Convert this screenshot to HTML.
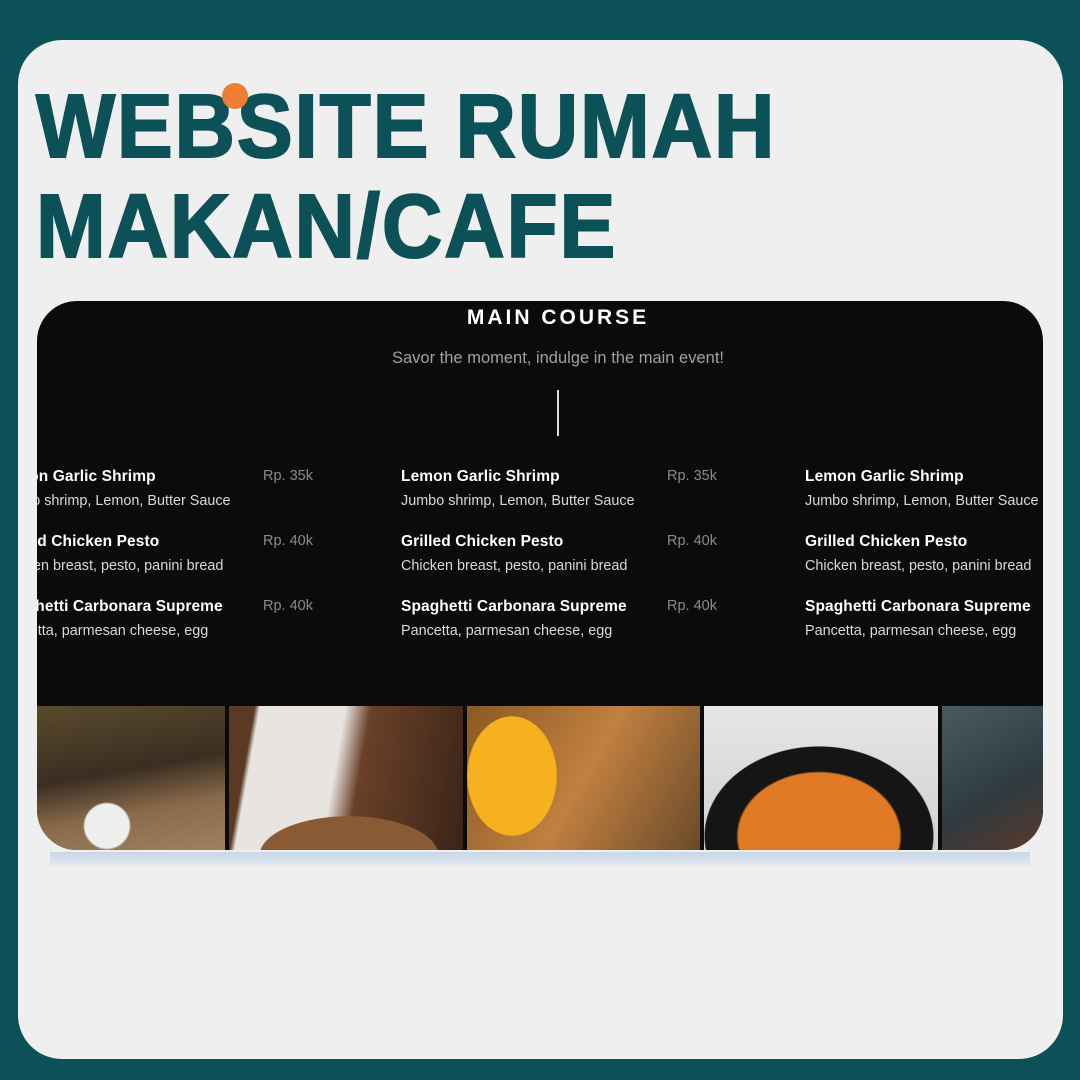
<!DOCTYPE html>
<html><head><meta charset="utf-8"><style>
*{margin:0;padding:0;box-sizing:border-box}
body{width:1080px;height:1080px;background:#0c5158;position:relative;overflow:hidden;font-family:"Liberation Sans",sans-serif}
.card{position:absolute;left:18px;top:40px;width:1045px;height:1019px;background:#efefef;border-radius:44px}
.title{position:absolute;left:36px;color:#0c5158;font-weight:bold;font-size:90px;line-height:1;white-space:nowrap;transform-origin:left top;letter-spacing:2px;-webkit-text-stroke:2px #0c5158}
.dot{position:absolute;left:222px;top:83px;width:26px;height:26px;border-radius:50%;background:#ef7d33}
.panel{position:absolute;left:37px;top:301px;width:1006px;height:549px;background:#0b0b0b;border-radius:40px;overflow:hidden}
.h{position:absolute;left:18px;width:100%;text-align:center;color:#fff}
.col{position:absolute;top:165px;width:340px;color:#fff}
.it{height:65px;position:relative}
.n{font-size:15.5px;font-weight:bold;position:absolute;top:2px;left:0;white-space:nowrap;letter-spacing:0.1px}
.d{font-size:14.4px;color:#d8d8d8;position:absolute;top:27px;left:0;white-space:nowrap}
.p{font-size:14.5px;color:#8a8a8a;position:absolute;top:2px;left:266px;white-space:nowrap}
.ph{position:absolute;top:405px;height:144px}
.bar{position:absolute;left:50px;top:852px;width:980px;height:14px;background:linear-gradient(#c9d6e6,#e3eaf3)}
</style></head><body>
<div class="card"></div>
<div class="title" style="top:82px;transform:scaleX(0.93)">WEBSITE RUMAH</div>
<div class="title" style="top:182px;transform:scaleX(0.93)">MAKAN/CAFE</div>
<div class="dot"></div>
<div class="bar"></div>
<div class="panel">
 <div class="h" style="top:5px;font-size:21px;font-weight:bold;letter-spacing:3px">MAIN COURSE</div>
 <div class="h" style="top:48px;font-size:16.5px;color:#a0a0a0">Savor the moment, indulge in the main event!</div>
 <div style="position:absolute;left:520px;top:89px;width:2px;height:46px;background:#ddd"></div>
 <div class="col" style="left:-40px">
  <div class="it"><div class="n">Lemon Garlic Shrimp</div><div class="d">Jumbo shrimp, Lemon, Butter Sauce</div><div class="p">Rp. 35k</div></div>
  <div class="it"><div class="n">Grilled Chicken Pesto</div><div class="d">Chicken breast, pesto, panini bread</div><div class="p">Rp. 40k</div></div>
  <div class="it"><div class="n">Spaghetti Carbonara Supreme</div><div class="d">Pancetta, parmesan cheese, egg</div><div class="p">Rp. 40k</div></div>
 </div>
 <div class="col" style="left:364px">
  <div class="it"><div class="n">Lemon Garlic Shrimp</div><div class="d">Jumbo shrimp, Lemon, Butter Sauce</div><div class="p">Rp. 35k</div></div>
  <div class="it"><div class="n">Grilled Chicken Pesto</div><div class="d">Chicken breast, pesto, panini bread</div><div class="p">Rp. 40k</div></div>
  <div class="it"><div class="n">Spaghetti Carbonara Supreme</div><div class="d">Pancetta, parmesan cheese, egg</div><div class="p">Rp. 40k</div></div>
 </div>
 <div class="col" style="left:768px">
  <div class="it"><div class="n">Lemon Garlic Shrimp</div><div class="d">Jumbo shrimp, Lemon, Butter Sauce</div></div>
  <div class="it"><div class="n">Grilled Chicken Pesto</div><div class="d">Chicken breast, pesto, panini bread</div></div>
  <div class="it"><div class="n">Spaghetti Carbonara Supreme</div><div class="d">Pancetta, parmesan cheese, egg</div></div>
 </div>
 <div class="ph" style="left:0;width:188px;background:radial-gradient(circle at 70px 120px,#eee 0 22px,transparent 24px),linear-gradient(170deg,#5a4a2c,#3a2e22 45%,#8a6a4a 70%,#a08060)"></div>
 <div class="ph" style="left:192px;width:234px;background:radial-gradient(ellipse 90px 40px at 120px 150px,#8a5a34 0 99%,transparent),linear-gradient(100deg,#5a3a24 0 10%,#e8e4e0 12% 45%,#6a4028 55%,#3a2418)"></div>
 <div class="ph" style="left:430px;width:233px;background:radial-gradient(ellipse 45px 60px at 45px 70px,#f5b21e 0 99%,transparent),linear-gradient(120deg,#8a5a22,#c08040 50%,#6a4a2a)"></div>
 <div class="ph" style="left:667px;width:234px;background:radial-gradient(ellipse 115px 90px at 115px 130px,#e07a24 0 70%,#151515 72% 99%,transparent),linear-gradient(#e6e6e6,#d0d0d0)"></div>
 <div class="ph" style="left:905px;width:101px;background:linear-gradient(150deg,#4a5a62,#2e3a40 60%,#5a3a2a)"></div>
</div>
</body></html>
